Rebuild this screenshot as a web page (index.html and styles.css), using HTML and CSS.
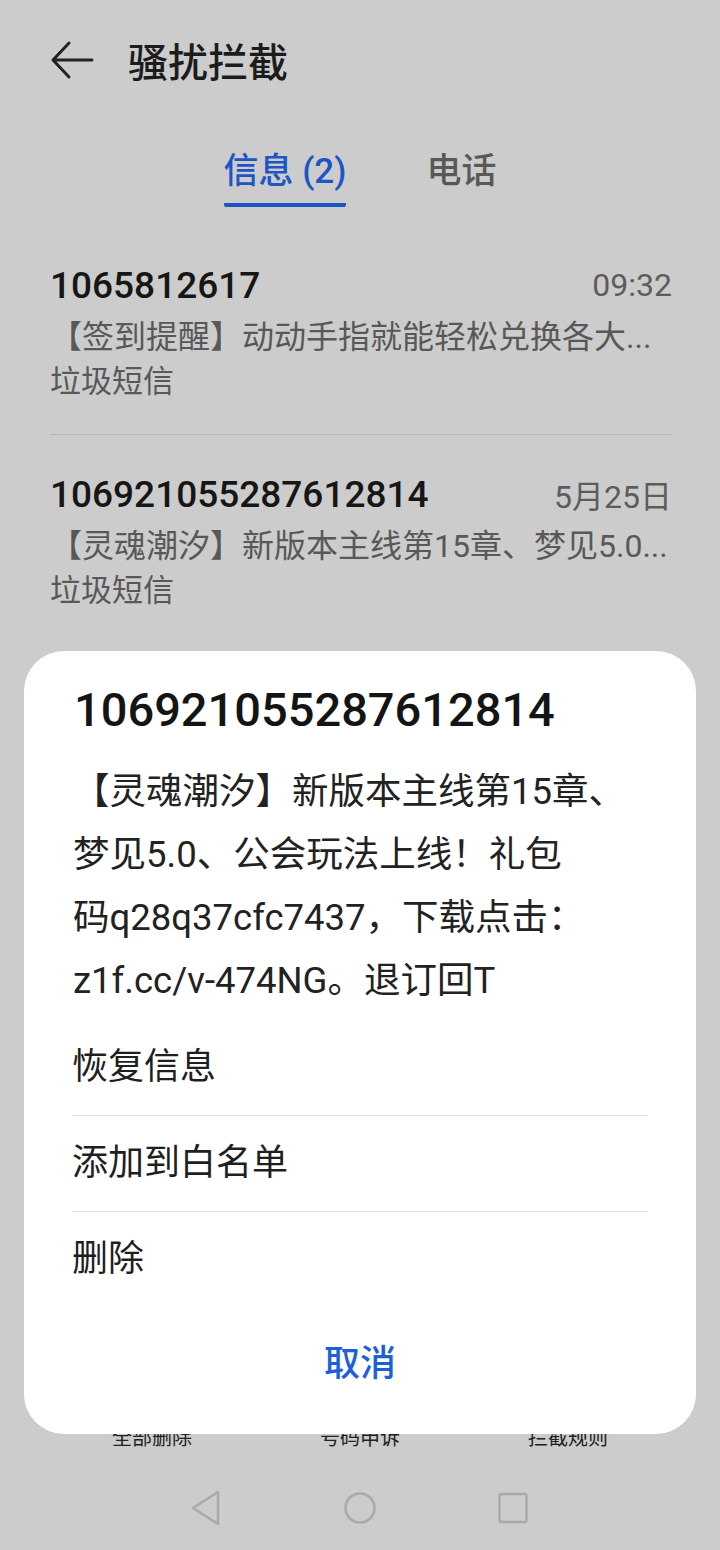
FILE: index.html
```html
<!DOCTYPE html>
<html lang="zh-CN">

<head>
    <meta charset="UTF-8">
    <title>骚扰拦截</title>
    <link rel="stylesheet" href="styles.css">
</head>

<body>
    <div class="page">
        <header class="topbar">
            <svg class="back" width="44" height="40" viewBox="0 0 44 40">
                <path d="M42 20 H4 M19 3 L3 20 L19 37" fill="none" stroke="#222" stroke-width="3" stroke-linecap="round" stroke-linejoin="round"/>
            </svg>
            <h1>骚扰拦截</h1>
        </header>

        <nav class="tabs">
            <div class="tab active">信息 (2)</div>
            <div class="tab">电话</div>
        </nav>

        <ul class="list">
            <li class="item">
                <div class="row">
                    <span class="sender">1065812617</span>
                    <span class="time">09:32</span>
                </div>
                <div class="preview">【签到提醒】动动手指就能轻松兑换各大...</div>
                <div class="tag">垃圾短信</div>
            </li>
            <li class="item">
                <div class="row">
                    <span class="sender">106921055287612814</span>
                    <span class="time">5月25日</span>
                </div>
                <div class="preview">【灵魂潮汐】新版本主线第15章、梦见5.0...</div>
                <div class="tag">垃圾短信</div>
            </li>
        </ul>

        <div class="toolbar">
            <div class="tool">全部删除</div>
            <div class="tool">号码申诉</div>
            <div class="tool">拦截规则</div>
        </div>

        <div class="navbar">
            <svg width="40" height="40" viewBox="0 0 40 40">
                <path d="M31 4 L6 20 L31 36 Z" fill="none" stroke="#a9a9a9" stroke-width="2.5" stroke-linejoin="round"/>
            </svg>
            <svg width="40" height="40" viewBox="0 0 40 40">
                <circle cx="20" cy="20" r="14.5" fill="none" stroke="#a9a9a9" stroke-width="2.5"/>
            </svg>
            <svg width="40" height="40" viewBox="0 0 40 40">
                <rect x="6.5" y="6" width="27" height="28" rx="2" fill="none" stroke="#a9a9a9" stroke-width="2.5"/>
            </svg>
        </div>
    </div>

    <div class="sheet">
        <div class="sheet-title">106921055287612814</div>
        <p class="sheet-body">【灵魂潮汐】新版本主线第15章、<br>梦见5.0、公会玩法上线！礼包<br>码q28q37cfc7437，下载点击：<br>z1f.cc/v-474NG。退订回T</p>
        <div class="menu">
            <div class="menu-item">恢复信息</div>
            <div class="menu-item">添加到白名单</div>
            <div class="menu-item">删除</div>
        </div>
        <div class="cancel">取消</div>
    </div>
</body>

</html>
```

FILE: styles.css
```css
body {
    margin: 0;
    width: 720px;
    height: 1550px;
    overflow: hidden;
    position: relative;
    background: #cccccc;
    font-family: Roboto, "Noto Sans CJK SC", sans-serif;
    color: #1a1a1a;
}

.page {
    height: 1550px;
    display: flex;
    flex-direction: column;
}

.topbar {
    height: 120px;
    display: flex;
    align-items: center;
    padding-left: 50px;
}

.back {
    margin-right: 34px;
}

.topbar h1 {
    margin: 0;
    font-size: 40px;
    font-weight: 500;
    color: #1c1c1c;
}

.tabs {
    display: flex;
    justify-content: center;
    gap: 80px;
    padding-top: 32px;
}

.tab {
    font-size: 35px;
    line-height: 40px;
    font-weight: 500;
    color: #585858;
    padding-bottom: 15px;
}

.tab.active {
    color: #1d55c6;
    border-bottom: 4px solid #1d55c6;
    border-radius: 2px;
    padding-bottom: 11px;
}

.list {
    list-style: none;
    margin: 19px 48px 0 50px;
    padding: 0;
}

.item {
    padding: 34px 0 30px;
    border-bottom: 1px solid #b6b6b6;
}

.item:last-child {
    border-bottom: none;
}

.row {
    display: flex;
    justify-content: space-between;
    align-items: center;
    height: 50px;
    margin-bottom: 5px;
}

.sender {
    font-size: 37px;
    font-weight: 500;
    color: #161616;
}

.time {
    font-size: 32px;
    color: #5c5c5c;
}

.preview {
    font-size: 32px;
    line-height: 44px;
    color: #585858;
    margin-bottom: 1px;
    white-space: nowrap;
}

.tag {
    font-size: 31px;
    line-height: 44px;
    color: #585858;
}

.toolbar {
    margin-top: auto;
    display: flex;
    padding: 0 48px 10px;
}

.tool {
    flex: 1;
    text-align: center;
    font-size: 20px;
    line-height: 24px;
    color: #222;
}

.navbar {
    height: 90px;
    display: flex;
    justify-content: center;
    align-items: center;
    gap: 113px;
    padding-top: 6px;
    box-sizing: border-box;
}

/* dialog over the dimmed page */
.sheet {
    position: absolute;
    left: 24px;
    top: 651px;
    width: 672px;
    box-sizing: border-box;
    padding: 34px 48px 20px;
    background: #ffffff;
    border-radius: 40px;
}

.sheet-title {
    font-size: 47px;
    line-height: 50px;
    font-weight: 500;
    color: #141414;
    padding-left: 2px;
}

.sheet-body {
    margin: 25px 0 0 1px;
    font-size: 36.5px;
    line-height: 63px;
    color: #222;
}

.menu {
    margin-top: 8px;
}

.menu-item {
    height: 95px;
    line-height: 95px;
    font-size: 36px;
    color: #1f1f1f;
    border-bottom: 1px solid #e3e3e3;
}

.menu-item:last-child {
    border-bottom: none;
}

.cancel {
    margin-top: 7px;
    height: 100px;
    line-height: 100px;
    text-align: center;
    font-size: 36px;
    font-weight: 500;
    color: #1c5fd8;
}
```
